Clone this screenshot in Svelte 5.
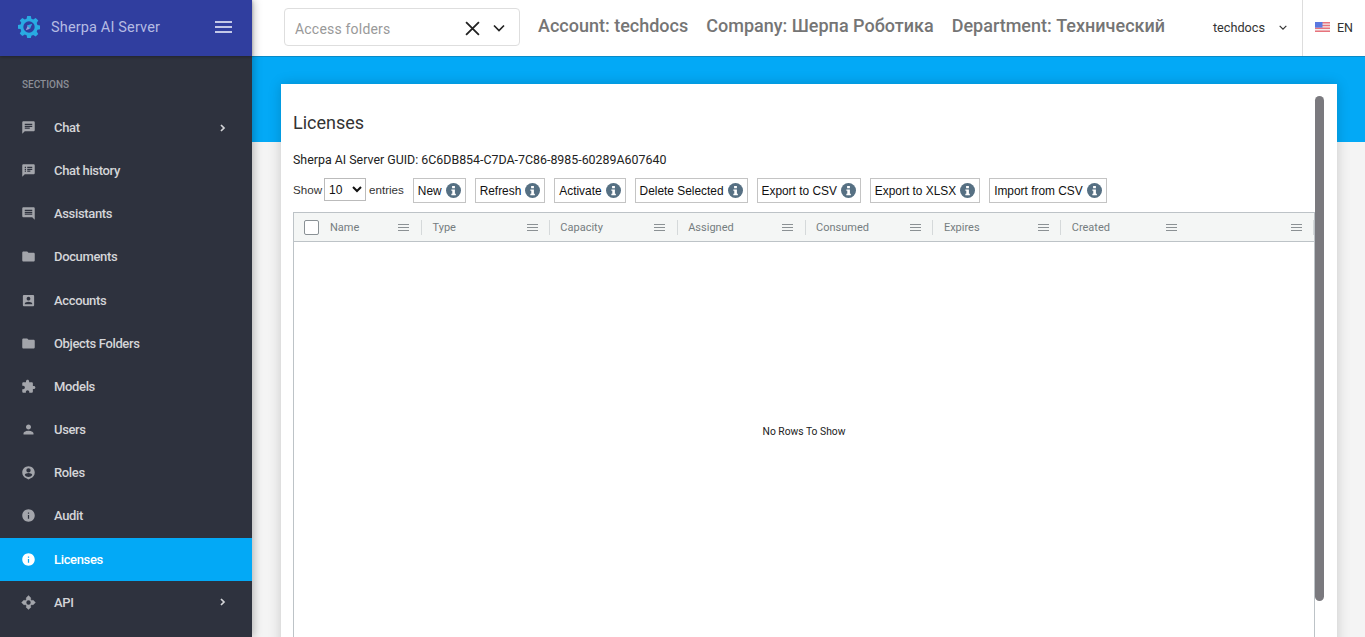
<script>
  const nav = [
    { label: 'Chat', icon: 'chat', arrow: true },
    { label: 'Chat history', icon: 'history' },
    { label: 'Assistants', icon: 'assistants' },
    { label: 'Documents', icon: 'folder' },
    { label: 'Accounts', icon: 'account' },
    { label: 'Objects Folders', icon: 'folder' },
    { label: 'Models', icon: 'puzzle' },
    { label: 'Users', icon: 'user' },
    { label: 'Roles', icon: 'roles' },
    { label: 'Audit', icon: 'info' },
    { label: 'Licenses', icon: 'info', active: true },
    { label: 'API', icon: 'api', arrow: true }
  ];
  const icons = {
    chat: 'M20 2H4c-1.1 0-2 .9-2 2v18l4-4h14c1.1 0 2-.9 2-2V4c0-1.1-.9-2-2-2zM6 9h12v2H6V9zm8 5H6v-2h8v2zm4-6H6V6h12v2z',
    history: 'M20 2H4c-1.1 0-2 .9-2 2v18l4-4h14c1.1 0 2-.9 2-2V4c0-1.1-.9-2-2-2zM8 14H6v-2h2v2zm0-3H6V9h2v2zm0-3H6V6h2v2zm7 6h-5v-2h5v2zm3-3h-8V9h8v2zm0-3h-8V6h8v2z',
    assistants: 'M21.99 4c0-1.1-.89-2-1.99-2H4c-1.1 0-2 .9-2 2v12c0 1.1.9 2 2 2h14l4 4-.01-18zM18 14H6v-2h12v2zm0-3H6V9h12v2zm0-3H6V6h12v2z',
    folder: 'M10 4H4c-1.1 0-1.99.9-1.99 2L2 18c0 1.1.9 2 2 2h16c1.1 0 2-.9 2-2V8c0-1.1-.9-2-2-2h-8l-2-2z',
    account: 'M3 5v14c0 1.1.89 2 2 2h14c1.1 0 2-.9 2-2V5c0-1.1-.9-2-2-2H5c-1.11 0-2 .9-2 2zm12 4c0 1.66-1.34 3-3 3s-3-1.34-3-3 1.34-3 3-3 3 1.34 3 3zm-9 8c0-2 4-3.1 6-3.1s6 1.1 6 3.1v1H6v-1z',
    puzzle: 'M20.5 11H19V7c0-1.1-.9-2-2-2h-4V3.5C13 2.12 11.88 1 10.5 1S8 2.12 8 3.5V5H4c-1.1 0-1.99.9-1.99 2v3.8H3.5c1.49 0 2.7 1.21 2.7 2.7s-1.21 2.7-2.7 2.7H2V20c0 1.1.9 2 2 2h3.8v-1.5c0-1.49 1.21-2.7 2.7-2.7 1.49 0 2.7 1.21 2.7 2.7V22H17c1.1 0 2-.9 2-2v-4h1.5c1.38 0 2.5-1.12 2.5-2.5S21.88 11 20.5 11z',
    user: 'M12 12c2.21 0 4-1.79 4-4s-1.79-4-4-4-4 1.79-4 4 1.79 4 4 4zm0 2c-2.67 0-8 1.34-8 4v2h16v-2c0-2.66-5.33-4-8-4z',
    roles: 'M12 2C6.48 2 2 6.48 2 12c0 4.3 2.7 7.96 6.5 9.38L12 23l3.5-1.62C19.3 19.96 22 16.3 22 12c0-5.52-4.48-10-10-10zm0 3a3.5 3.5 0 1 1 0 7 3.5 3.5 0 0 1 0-7zm0 14.2c-2.5 0-4.71-1.28-6-3.22.03-1.99 4-3.08 6-3.08s5.97 1.09 6 3.08c-1.29 1.94-3.5 3.22-6 3.22z',
    info: 'M12 2C6.48 2 2 6.48 2 12s4.48 10 10 10 10-4.48 10-10S17.52 2 12 2zm1 15h-2v-6h2v6zm0-8h-2V7h2v2z',
    api: 'M12 0.500 7.500 5l1.500 1.500a8 8 0 0 0-2.500 2.500L5 7.500.5 12 5 16.500 6.500 15a8 8 0 0 0 2.500 2.500L7.500 19l4.500 4.500 4.500-4.500-1.500-1.500a8 8 0 0 0 2.500-2.500l1.500 1.500 4.500-4.500L19 7.500 17.500 9A8 8 0 0 0 15 6.500L16.500 5 12 .5zm0 8a3.500 3.500 0 1 1 0 7 3.500 3.500 0 0 1 0-7z'
  };
  const actions = ['New', 'Refresh', 'Activate', 'Delete Selected', 'Export to CSV', 'Export to XLSX', 'Import from CSV'];
  const columns = ['Name', 'Type', 'Capacity', 'Assigned', 'Consumed', 'Expires', 'Created'];
</script>

<div class="page">
  <aside class="sidebar">
    <div class="brand">
      <svg class="logo" viewBox="0 0 24 24">
        <path fill="#29abe2" d="M10 0h4l.6 3.100 2 .8L19.300 2.200l2.800 2.800-1.700 2.700.8 2 3.100.6v4l-3.100.6-.8 2 1.700 2.700-2.800 2.800-2.700-1.700-2 .8L14 24h-4l-.6-3.100-2-.8-2.700 1.700-2.800-2.800 1.700-2.700-.8-2L-.3 14v-4l3.100-.6.8-2L1.900 5l2.800-2.800 2.700 1.700 2-.8L10 0z" />
        <circle cx="12" cy="12" r="6.200" fill="#303e9f" />
        <path fill="#29abe2" d="M15.500 8.500 13.200 14l-2-1.600-1.600-2 5.900-1.900z" />
        <path fill="#8fa0d8" d="M8.500 15.500 10.500 11l2.500 2.800-4.500 1.700z" />
      </svg>
      <span class="brand-name">Sherpa AI Server</span>
      <span class="burger"><i></i><i></i><i></i></span>
    </div>
    <div class="section">SECTIONS</div>
    <nav>
      {#each nav as item}
        <div class="item" class:active={item.active}>
          <svg class="icon" viewBox="0 0 24 24"><path fill="currentColor" fill-rule="evenodd" d={icons[item.icon]} /></svg>
          <span class="label">{item.label}</span>
          {#if item.arrow}
            <svg class="arrow" viewBox="0 0 8 8"><path fill="none" stroke="currentColor" stroke-width="1.700" d="M2 1l3 3-3 3" /></svg>
          {/if}
        </div>
      {/each}
    </nav>
  </aside>

  <div class="main">
    <header class="topbar">
      <div class="picker">
        <span class="placeholder">Access folders</span>
        <svg class="clear" viewBox="0 0 14 14"><path fill="none" stroke="#222" stroke-width="1.700" d="M1 1l12 12M13 1L1 13" /></svg>
        <svg class="chev" viewBox="0 0 12 8"><path fill="none" stroke="#222" stroke-width="1.700" d="M1 1.500l5 5 5-5" /></svg>
      </div>
      <div class="context">
        <span>Account: techdocs</span>
        <span>Company: Шерпа Роботика</span>
        <span>Department: Технический</span>
      </div>
      <div class="user">
        <span>techdocs</span>
        <svg viewBox="0 0 12 8"><path fill="none" stroke="#333" stroke-width="1.400" d="M2 2l4 4 4-4" /></svg>
      </div>
      <div class="lang">
        <svg class="flag" viewBox="0 0 15 10">
          <rect width="15" height="10" fill="#f0eeee" />
          <path fill="#e8737c" d="M0 0h15v1.400H0zM0 2.800h15v1.400H0zM0 5.600h15V7H0zM0 8.400h15V10H0z" />
          <rect width="7.500" height="5.600" fill="#5a78e0" />
        </svg>
        <span>EN</span>
      </div>
    </header>

    <div class="content">
      <div class="band"></div>
      <section class="card">
        <h1>Licenses</h1>
        <p class="guid">Sherpa AI Server GUID: 6C6DB854-C7DA-7C86-8985-60289A607640</p>
        <div class="toolbar">
          <div class="show">
            <span>Show</span>
            <select><option>10</option></select>
            <span>entries</span>
          </div>
          {#each actions as action}
            <div class="btn">
              <span>{action}</span>
              <svg viewBox="0 0 16 16">
                <circle cx="8" cy="8" r="8" fill="#567083" />
                <path fill="#fff" d="M6.500 3.200h3v2.300h-3zM5.700 6.800h3.800v4.700h1v1.500H5.700v-1.500h1V8.300h-1z" />
              </svg>
            </div>
          {/each}
        </div>
        <div class="grid">
          <div class="grid-head">
            <span class="check"></span>
            {#each columns as col, i}
              <div class="col" class:first={i === 0}>
                <span class="name">{col}</span>
                <span class="menu"><i></i><i></i><i></i></span>
                {#if i === columns.length - 1}
                  <span class="menu end"><i></i><i></i><i></i></span>
                {/if}
              </div>
            {/each}
          </div>
          <div class="grid-body">No Rows To Show</div>
        </div>
        <div class="scroll"></div>
      </section>
    </div>
  </div>
</div>

<style>
  :global(body) {
    margin: 0;
    overflow: hidden;
    font-family: Roboto, "Liberation Sans", sans-serif;
  }
  .page {
    display: flex;
    width: 1365px;
    height: 637px;
    overflow: hidden;
    background: #f4f4f4;
  }
  .sidebar {
    flex: 0 0 252px;
    height: 637px;
    background: #2e323e;
    box-shadow: 2px 0 8px rgba(0, 0, 0, 0.25);
    position: relative;
    z-index: 2;
  }
  .brand {
    display: flex;
    align-items: center;
    height: 56px;
    padding: 0 19px 2px 18px;
    box-sizing: border-box;
    background: #303e9f;
    box-shadow: 0 1px 3px rgba(0, 0, 0, 0.3);
  }
  .logo {
    width: 22px;
    height: 22px;
    margin-right: 11px;
    flex: none;
  }
  .brand-name {
    flex: 1;
    font-size: 14.500px;
    color: #b5bbe3;
    letter-spacing: 0.150px;
  }
  .burger {
    display: flex;
    flex-direction: column;
    gap: 3px;
    margin-right: 1px;
  }
  .burger i {
    display: block;
    width: 17px;
    height: 2px;
    background: #c3c8e8;
  }
  .section {
    padding: 23px 0 0 22px;
    height: 27px;
    font-size: 10px;
    font-weight: 500;
    line-height: 12px;
    color: #8b8e96;
  }
  nav {
    display: flex;
    flex-direction: column;
  }
  .item {
    display: flex;
    align-items: center;
    height: 43.150px;
    padding: 0 22px;
    font-size: 13px;
    font-weight: 500;
    color: #d4d5d8;
    letter-spacing: -0.350px;
  }
  .item .icon {
    width: 15px;
    height: 15px;
    margin-left: -1px;
    margin-right: 18px;
    color: #a3a5ab;
    flex: none;
  }
  .item .label {
    flex: 1;
  }
  .item .arrow {
    width: 8px;
    height: 8px;
    margin-right: 3.400px;
    color: #d4d5d8;
  }
  .item.active {
    height: 43px;
    margin-top: 0.300px;
    background: #03a9f6;
    color: #fff;
  }
  .item.active .icon {
    color: #fff;
  }
  .main {
    flex: 1;
    display: flex;
    flex-direction: column;
    min-width: 0;
  }
  .topbar {
    display: flex;
    align-items: stretch;
    height: 56px;
    background: #fff;
    flex: none;
    position: relative;
    z-index: 1;
    box-shadow: 0 1px 0 #0a8ac6;
  }
  .picker {
    display: flex;
    align-items: center;
    width: 236px;
    height: 38px;
    margin: 8px 0 0 32px;
    padding: 2px 14px 0 10px;
    box-sizing: border-box;
    border: 1px solid #dedede;
    border-radius: 4px;
    flex: none;
  }
  .placeholder {
    flex: 1;
    margin-top: 2px;
    font-size: 14px;
    color: #999;
    letter-spacing: 0.200px;
  }
  .clear {
    width: 15px;
    height: 15px;
    margin-right: 13px;
  }
  .chev {
    width: 12px;
    height: 8px;
  }
  .context {
    display: flex;
    align-items: center;
    gap: 18px;
    margin-left: 18px;
    padding-bottom: 6px;
    font-size: 18px;
    font-weight: 500;
    color: #757575;
    white-space: nowrap;
  }
  .user {
    margin-left: auto;
    display: flex;
    align-items: center;
    gap: 12.500px;
    padding-right: 14.500px;
    padding-bottom: 2px;
    font-size: 12.700px;
    color: #333;
  }
  .user svg {
    width: 10px;
    height: 7px;
  }
  .lang {
    display: flex;
    align-items: center;
    gap: 7px;
    width: 63px;
    box-sizing: border-box;
    padding: 0 0 2px 12px;
    border-left: 1px solid #ddd;
    font-size: 12.500px;
    color: #333;
  }
  .flag {
    width: 15px;
    height: 10px;
  }
  .content {
    flex: 1;
    position: relative;
    padding: 28px 28px 0 29px;
    min-height: 0;
  }
  .band {
    position: absolute;
    left: 0;
    right: 0;
    top: 1px;
    height: 85px;
    background: #03a9f6;
  }
  .card {
    position: relative;
    height: 600px;
    padding: 0 12px;
    box-sizing: border-box;
    background: #fff;
    box-shadow: 0 0 12px rgba(0, 0, 0, 0.18);
  }
  h1 {
    margin: 0;
    padding-top: 28px;
    font-size: 18px;
    font-weight: 400;
    line-height: 22px;
    color: #333;
  }
  .guid {
    margin: 18px 0 0;
    font-size: 12.400px;
    line-height: 16px;
    color: #222;
  }
  .toolbar {
    display: flex;
    align-items: flex-start;
    gap: 9px;
    margin-top: 10px;
    font-family: "Liberation Sans", Arial, sans-serif;
    font-size: 11.900px;
    color: #111;
  }
  .show {
    display: flex;
    align-items: center;
    gap: 2px;
    height: 23px;
    font-size: 11.600px;
    color: #333;
  }
  select {
    width: 42px;
    height: 23px;
    font: 12px "Liberation Sans", Arial, sans-serif;
    color: #111;
    background: #fff;
    border: 1px solid #bbb;
    border-radius: 0;
    padding: 0;
    margin: 0 1px 0 0;
  }
  .btn {
    display: flex;
    align-items: center;
    gap: 4px;
    height: 25px;
    padding: 0 4px;
    box-sizing: border-box;
    border: 1px solid #c4c4c4;
    white-space: nowrap;
  }
  .btn svg {
    width: 15px;
    height: 15px;
  }
  .grid {
    width: 1022px;
    margin-top: 9px;
    border: 1px solid #bdc3c7;
    box-sizing: border-box;
    height: 500px;
  }
  .grid-head {
    display: flex;
    align-items: center;
    height: 29px;
    box-sizing: border-box;
    background: #f4f6f5;
    border-bottom: 1px solid #bdc3c7;
    font-size: 11px;
    color: #757d80;
  }
  .check {
    width: 13px;
    height: 13px;
    margin: 0 0 0 10px;
    border: 1px solid #8a9195;
    border-radius: 2px;
    background: #fff;
    flex: none;
  }
  .col {
    display: flex;
    align-items: center;
    flex: none;
    width: 127.850px;
    height: 15px;
    box-sizing: border-box;
    padding-left: 10.500px;
    border-right: 1px solid #d5d9da;
  }
  .name {
    flex: 0 0 94px;
  }
  .col.first {
    width: 103px;
    padding-left: 11px;
  }
  .col.first .name {
    flex-basis: 68px;
  }
  .col:last-child {
    width: 253px;
  }
  .menu {
    display: flex;
    flex-direction: column;
    gap: 2px;
  }
  .menu.end {
    margin-left: auto;
    margin-right: 11px;
  }
  .menu i {
    display: block;
    width: 11px;
    height: 1px;
    background: #8b9194;
  }
  .grid-body {
    display: flex;
    justify-content: center;
    padding-top: 184px;
    font-size: 10.300px;
    line-height: 12px;
    color: #222;
  }
  .scroll {
    position: absolute;
    top: 12px;
    left: 1034px;
    width: 9px;
    height: 505px;
    border-radius: 5px;
    background: #7a797e;
  }
</style>
